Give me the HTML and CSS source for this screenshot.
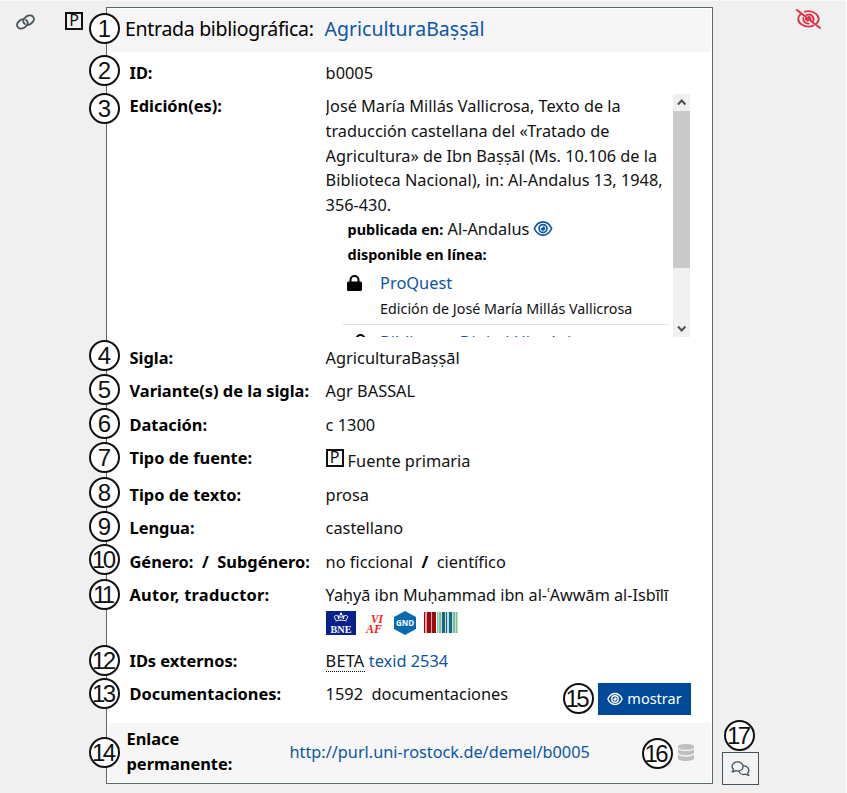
FILE: index.html
```html
<!DOCTYPE html>
<html lang="es">
<head>
<meta charset="utf-8">
<title>AgriculturaBaṣṣāl</title>
<link rel="stylesheet" href="styles.css">
</head>
<body>
<svg class="defs" aria-hidden="true">
  <symbol id="eye" viewBox="0 0 576 512"><g fill="none" stroke="currentColor" stroke-width="50"><path d="M27 256C78 148 168 56 288 56s210 92 261 200c-51 108-141 200-261 200S78 364 27 256z"/><circle cx="288" cy="256" r="119"/></g><path d="M288 190a66 66 0 1 1-66 66c0-7 1-10 3-16a46 46 0 0 0 58-50z" fill="currentColor"/></symbol>
</svg>
<div class="page">
  <aside class="left">
    <svg class="link-icon" viewBox="0 0 20 16"><g fill="none" stroke="currentColor" stroke-width="1.900" stroke-linecap="round"><path d="M9.500 10.200C7.200 8.800 7 6 8.900 4.100l1.300-1.300C12.300.8 15.700.4 17.600 2c1.900 1.700 1.700 4.500-.3 6.300l-1.700 1.500c-1 .8-2 1.200-3.200 1.300"/><path d="M10.500 5.800c2.300 1.400 2.500 4.200.6 6.100l-1.300 1.300c-2.100 2-5.500 2.400-7.400.8C.5 12.300.7 9.500 2.700 7.700l1.700-1.500c1-.8 2-1.200 3.200-1.300"/></g></svg>
    <span class="p-box">P</span>
  </aside>
  <main class="card">
    <header class="row head">
      <span class="badge b1">1</span>
      <span class="head-label">Entrada bibliográfica:</span>
      <a class="head-link">AgriculturaBaṣṣāl</a>
    </header>
    <div class="body">
      <div class="row"><span class="badge b2">2</span><b>ID:</b><div>b0005</div></div>
      <div class="row edition"><span class="badge b3">3</span><b>Edición(es):</b>
        <div class="scroller">
          <div class="content">
            <div class="cite">José María Millás Vallicrosa, Texto de la<br>traducción castellana del «Tratado de<br>Agricultura» de Ibn Baṣṣāl (Ms. 10.106 de la<br>Biblioteca Nacional), in: Al-Andalus 13, 1948,<br>356-430.</div>
            <div class="meta"><strong>publicada en:</strong> Al-Andalus <svg class="eye"><use href="#eye"/></svg></div>
            <div class="meta"><strong>disponible en línea:</strong></div>
            <div class="source">
              <svg class="lock" viewBox="0 0 15 16"><path d="M3.500 7V5a4 4 0 0 1 8 0v2" fill="none" stroke="currentColor" stroke-width="2"/><rect y="6.500" width="15" height="9.500" rx="1.600" fill="currentColor"/></svg>
              <div><a>ProQuest</a><div class="note">Edición de José María Millás Vallicrosa</div></div>
            </div>
            <div class="source next">
              <svg class="lock" viewBox="0 0 15 16"><path d="M3.500 7V5a4 4 0 0 1 8 0" fill="none" stroke="currentColor" stroke-width="2"/><rect y="6.500" width="15" height="9.500" rx="1.600" fill="currentColor"/></svg>
              <a>Biblioteca Digital Hispánica</a>
            </div>
          </div>
          <div class="bar">
            <svg viewBox="0 0 17 17"><path d="M5 10.500l3.700-4 3.700 4"/></svg>
            <span class="thumb"></span>
            <svg viewBox="0 0 17 17"><path d="M5 6.500l3.700 4 3.700-4"/></svg>
          </div>
        </div>
      </div>
      <div class="row"><span class="badge b4">4</span><b>Sigla:</b><div>AgriculturaBaṣṣāl</div></div>
      <div class="row"><span class="badge b5">5</span><b>Variante(s) de la sigla:</b><div>Agr BASSAL</div></div>
      <div class="row"><span class="badge b6">6</span><b>Datación:</b><div>c 1300</div></div>
      <div class="row kind"><span class="badge b7">7</span><b>Tipo de fuente:</b><div class="primary"><span class="p-box">P</span><span>Fuente primaria</span></div></div>
      <div class="row"><span class="badge b8">8</span><b>Tipo de texto:</b><div>prosa</div></div>
      <div class="row"><span class="badge b9">9</span><b>Lengua:</b><div>castellano</div></div>
      <div class="row"><span class="badge two b10">10</span><b>Género:&nbsp; /&nbsp; Subgénero:</b><div>no ficcional&nbsp; <strong>/</strong>&nbsp; científico</div></div>
      <div class="row author"><span class="badge two b11">11</span><b>Autor, traductor:</b>
        <div>Yaḥyā ibn Muḥammad ibn al-ʿAwwām al-Isbīlī
          <div class="logos">
            <svg width="30" height="24" viewBox="0 0 30 24"><path fill="#07208c" d="M0 0h30v24H0z"/><g fill="none" stroke="#fff" stroke-width="1"><path d="M9.500 10c4-1.200 7-1.200 11 0M10 9C7.500 6 8 4.500 10.500 4.500S12 7 12.500 8M20 9c2.500-3 2-4.500-.5-4.500S18 7 17.500 8M13 8c-1-3 0-4.500 2-4.500s3 1.500 2 4.500M15 1.500v3M14 2.500h2M12 6h6"/></g><text x="15" y="21.500" text-anchor="middle" textLength="21" lengthAdjust="spacingAndGlyphs" class="bne">BNE</text></svg>
            <svg class="viaf" width="19" height="24" viewBox="0 0 19 24"><text x="6" y="11.500" textLength="12" lengthAdjust="spacingAndGlyphs">VI</text><text x="1" y="22" textLength="16" lengthAdjust="spacingAndGlyphs">AF</text></svg>
            <svg width="22" height="24" viewBox="0 0 22 24"><path fill="#0869b1" d="M11 0l11 6v12l-11 6-11-6V6z"/><text x="11" y="15.300" text-anchor="middle" textLength="18" lengthAdjust="spacingAndGlyphs" class="gnd">GND</text></svg>
            <svg width="34" height="21" viewBox="0 0 34 21" shape-rendering="crispEdges"><path fill="#e0a5a5" d="M0 0h12v21H0z"/><path fill="#c3e0d0" d="M13 0h21v21H13z"/><path fill="#970c10" d="M0 0h1v21H0zM3 0h4v21H3zM8 0h4v21H8z"/><path fill="#7abf98" d="M13 0h1v21h-1zM15 0h2v21h-2zM29 0h2v21h-2zM32 0h1v21h-1z"/><path fill="#16638f" d="M18 0h3v21h-3zM22 0h1v21h-1zM25 0h3v21h-3z"/></svg>
          </div>
        </div>
      </div>
      <div class="row"><span class="badge two b12">12</span><b>IDs externos:</b><div><abbr>BETA</abbr> <a>texid 2534</a></div></div>
      <div class="row docs"><span class="badge two b13">13</span><b>Documentaciones:</b><div>1592&nbsp; documentaciones</div><span class="badge two b15">15</span><button class="show"><svg class="eye"><use href="#eye"/></svg><span>mostrar</span></button></div>
    </div>
    <footer class="row foot">
      <span class="badge two b14">14</span>
      <b>Enlace permanente:</b>
      <a>http://purl.uni-rostock.de/demel/b0005</a>
      <span class="badge two b16">16</span>
      <svg class="db" viewBox="0 0 15 16"><path fill="currentColor" d="M0 2.200C0 .9 3.200 0 7.500 0S15 .9 15 2.200v1C15 4.500 11.700 5.400 7.500 5.400S0 4.500 0 3.200zM0 5c1.500 1.200 4.200 1.700 7.500 1.700S13.500 6.200 15 5v3.300c0 1.300-3.300 2.200-7.500 2.200S0 9.600 0 8.300zM0 10.200c1.500 1.200 4.200 1.700 7.500 1.700s6-.5 7.500-1.700v3.500c0 1.300-3.300 2.300-7.500 2.300S0 15 0 13.700z"/></svg>
    </footer>
  </main>
  <aside class="right">
    <svg class="hidden-icon" viewBox="0 0 25 20"><g fill="none" stroke="currentColor" stroke-width="1.900" stroke-linecap="round"><path d="M4.500 5.200C3.200 6.600 2.200 8.200 2.200 10c0 3.800 4.800 7.600 10.300 7.600 1.700 0 3.300-.4 4.800-1M9 2.700c1.100-.4 2.300-.6 3.500-.6 5.500 0 10.300 4.100 10.300 7.900 0 1.600-.9 3.100-2.300 4.400M7.300 9.200c-.3 3.100 2.200 5.500 5.300 5.400M10.500 6c3.200-1.500 7.100.5 7.100 4 0 .8-.1 1.500-.4 2.100M12.500 8c1.300 0 2.100.8 2.100 2M10 9.500c0 1.300.8 2 2 2.200"/><path d="M.9.900L24 19"/></g></svg>
    <div class="comments">
      <span class="badge two b17">17</span>
      <svg viewBox="0 0 20 16"><g fill="none" stroke="currentColor" stroke-width="1.400" stroke-linejoin="round"><path d="M1 11.500c1-.8 1.400-1.700 1.500-2.600C1.500 8 1 7 1 5.800 1 3 3.500 1 6.800 1s5.900 2 5.900 4.800-2.600 4.900-5.900 4.900c-.8 0-1.500-.1-2.200-.4-1 .8-2.200 1.200-3.600 1.200z"/><path d="M12.500 5.200c3.600-.3 6.400 1.800 6.400 4.700 0 1.200-.5 2.300-1.400 3.100.1.800.5 1.500 1.400 2.200-1.400 0-2.500-.4-3.500-1.100-2.900.9-6-.3-7.200-3.500"/></g></svg>
    </div>
  </aside>
</div>
</body>
</html>
```
FILE: styles.css
```css
* { box-sizing: border-box; }
body {
  margin: 0;
  background: #fff;
  color: #111;
  font: 16.35px/24.6px "Noto Sans", "Open Sans", sans-serif;
}
.defs { position: absolute; width: 0; height: 0; }
.page {
  display: flex;
  width: 846px;
  height: 793px;
  padding-top: 6px;
  background: #f0f0f0;
  border-top: 1px solid #fafafa;
}
a { color: #0d55a5; text-decoration: none; }
b, strong { font-weight: 700; color: #000; }
b { font-size: 16.4px; padding-left: .5px; }

.left { width: 106px; padding: 5px 0 0 16px; display: flex; gap: 30px; }
.link-icon { width: 19px; height: 16px; margin-top: 2px; color: #44535b; }
.p-box {
  display: block;
  flex: none;
  width: 18px;
  height: 18px;
  border: 2px solid #111;
  font-size: 16px;
  line-height: 13px;
  text-align: center;
}

.card {
  display: flex;
  flex-direction: column;
  width: 607px;
  height: 777px;
  padding: 1px;
  background: #fff;
  border: 1px solid #59686a;
}
.row {
  position: relative;
  display: grid;
  grid-template-columns: 196.6px 1fr;
  min-height: 33.4px;
  padding: 4.4px 20px 4.4px 21px;
  white-space: nowrap;
}
.head {
  height: 43px;
  padding: 6px 0 0 17px;
  grid-template-columns: 199.5px 1fr;
  background: #f6f6f6;
  font-size: 19.5px;
  line-height: 27px;
}
.head-label { color: #000; letter-spacing: -.3px; }
.body { flex: 1; padding-top: 4.6px; }

.badge {
  position: absolute;
  left: -19px;
  top: 4px;
  width: 31px;
  height: 31px;
  border: 2px solid #111;
  border-radius: 50%;
  background: #fff;
  color: #111;
  font: 24px/28px "Liberation Sans", sans-serif;
  text-align: center;
}
.two { letter-spacing: -2.6px; text-indent: -3.5px; }
.b2, .b3 { top: -2px; }
.b3 { top: 3px; }
.b4, .b5 { top: -1px; }
.b6, .b7, .b8, .b9, .b10, .b11, .b12, .b13 { top: 0; }
.b8, .b9, .b10 { top: -1px; }

.edition { height: 251.4px; }
.scroller { display: flex; width: 364.4px; height: 243px; overflow: hidden; }
.content { flex: 1; }
.cite { height: 123px; font-size: 16.3px; }
.meta { height: 25px; padding-left: 22px; }
.meta strong { font-size: 14.4px; }
.eye { width: 20px; height: 17px; color: #0d55a5; vertical-align: -2px; }
.meta .eye { margin-left: -1px; }
.source {
  display: flex;
  gap: 18px;
  height: 58px;
  margin: 0 4px 0 17.5px;
  padding: 3px 0 0 4px;
  border-bottom: 1.5px solid #e2e2e2;
  line-height: 26px;
}
.lock { flex: none; width: 15px; height: 16px; margin-top: 5px; color: #000; }
.note { font-size: 14.3px; }
.next { border: 0; padding-top: 4px; }
.next .lock { margin-left: 6px; margin-right: -6px; }
.bar { display: flex; flex-direction: column; width: 17px; background: #f0f0f0; }
.bar svg { height: 17px; fill: none; stroke: #505050; stroke-width: 2; }
.thumb { height: 157px; margin-bottom: auto; background: #cacaca; }

.kind { height: 36.8px; }
.primary { display: flex; gap: 4px; padding-top: 3px; }
.primary .p-box { margin-top: 0; }
.primary .p-box { position: relative; top: 0; margin-top: 0; transform: translateY(0); align-self: flex-start; margin-bottom: 0; }
.primary { align-items: flex-start; }
.author { height: 66px; font-size: 16.2px; }
.author b { letter-spacing: .25px; }
.logos { display: flex; gap: 9.5px; height: 24px; margin-top: 3px; }
.logos svg:last-child { margin-top: 1px; margin-left: -1px; }
.bne { fill: #fff; font: 700 11px "Liberation Serif", serif; }
.viaf { overflow: visible; fill: #f51b12; font: italic 700 13px "Liberation Serif", serif; }
.gnd { fill: #fff; font: 700 9px "Open Sans", sans-serif; }
abbr { border-bottom: 1px dotted #111; display: inline-block; line-height: 20px; letter-spacing: .2px; }
.show {
  position: absolute;
  right: 20px;
  top: 5px;
  display: flex;
  align-items: center;
  justify-content: center;
  gap: 4px;
  width: 93px;
  height: 32px;
  padding: 0;
  border: 0;
  background: #004a99;
  color: #fff;
  font: inherit;
  font-size: 14.5px;
}
.show span { margin-top: -2px; }
.show .eye { width: 16px; height: 14px; color: #fff; }
.b15 { left: 454.5px; top: 5px; }

.foot {
  grid-template-columns: 163.5px 1fr auto;
  align-items: center;
  height: 59px;
  padding: 0 17px 1px 18px;
  background: #f6f6f6;
}
.foot b { white-space: normal; width: 110px; }
.foot a { font-size: 16.3px; }
.b14 { top: 14px; }
.b16 { left: 533.5px; top: 15px; }
.db { width: 16px; height: 17px; color: #bfbfbf; }

.right { display: flex; flex: 1; flex-direction: column; justify-content: space-between; padding: 2px 0 8px 9px; }
.hidden-icon { width: 25px; height: 20px; margin-left: 74px; color: #dd3145; }
.comments {
  position: relative;
  display: grid;
  place-items: center;
  width: 37px;
  height: 33px;
  border: 1px solid #44535b;
  background: #f3f3f3;
  color: #44535b;
}
.comments svg { width: 19px; height: 15px; }
.b17 { left: 1px; top: -33px; }
```
